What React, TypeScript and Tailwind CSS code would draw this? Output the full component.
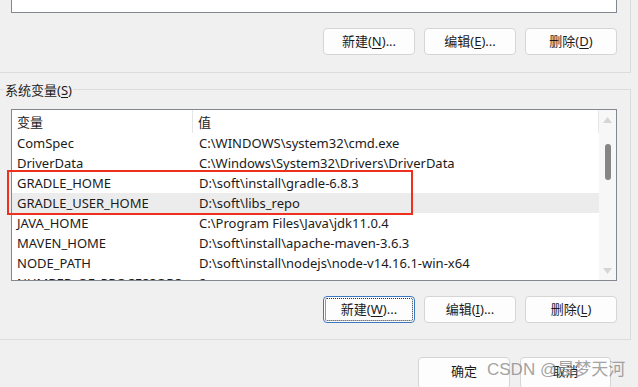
import React from "react";

const rows: [string, string][] = [
  ["ComSpec", "C:\\WINDOWS\\system32\\cmd.exe"],
  ["DriverData", "C:\\Windows\\System32\\Drivers\\DriverData"],
  ["GRADLE_HOME", "D:\\soft\\install\\gradle-6.8.3"],
  ["GRADLE_USER_HOME", "D:\\soft\\libs_repo"],
  ["JAVA_HOME", "C:\\Program Files\\Java\\jdk11.0.4"],
  ["MAVEN_HOME", "D:\\soft\\install\\apache-maven-3.6.3"],
  ["NODE_PATH", "D:\\soft\\install\\nodejs\\node-v14.16.1-win-x64"],
  ["NUMBER_OF_PROCESSORS", "8"],
];

function Btn({ label, k, focus }: { label: string; k: string; focus?: boolean }) {
  return (
    <div
      className={
        "w-[92px] h-[27px] rounded-[4px] bg-[#fdfdfd] flex items-center justify-center text-[13px] text-[#1b1b1b] " +
        (focus ? "border border-[#3b78c2] p-[1px]" : "border border-[#d5d5d5]")
      }
    >
      <div
        className={
          "w-full h-full flex items-center justify-center rounded-[2px] " +
          (focus ? "border border-dotted border-[#333]" : "")
        }
      >
        {label}(<span className="underline underline-offset-2">{k}</span>)
        {label !== "删除" ? "..." : ""}
      </div>
    </div>
  );
}

export default function App() {
  return (
    <div
      className="relative w-[638px] h-[387px] overflow-hidden bg-[#f0f0f0] text-[#1b1b1b]"
      style={{ fontFamily: '"Noto Sans", "Noto Sans CJK SC", sans-serif' }}
    >
      {/* user variables group (cut off) */}
      <div className="w-[631px] h-[73px] border-r border-b border-[#dcdcdc]">
        <div className="ml-[11px] w-[606px] h-[13px] bg-white border-x border-b border-[#828790]" />
        <div className="ml-[323px] mt-[15px] flex gap-[9px]">
          <Btn label="新建" k="N" />
          <Btn label="编辑" k="E" />
          <Btn label="删除" k="D" />
        </div>
      </div>

      {/* system variables group */}
      <div className="relative mt-[16px] w-[631px] h-[251px] border-t border-r border-b border-[#dcdcdc]">
        <div className="absolute left-[4px] top-[-10px] bg-[#f0f0f0] px-[1px] text-[13px] leading-[20px]">
          系统变量(<span className="underline underline-offset-2">S</span>)
        </div>
        <div className="ml-[11px] mt-[19px] w-[606px] h-[172px] bg-white border border-[#828790] flex overflow-hidden">
          <div className="flex-1 flex flex-col text-[13px]">
            <div className="h-[23px] shrink-0 flex items-center border-r border-[#e8e8e8]">
              <div className="w-[181px] h-full flex items-center pl-[5px] pt-[2px] border-r border-[#e5e5e5]">变量</div>
              <div className="pl-[5px] pt-[2px]">值</div>
            </div>
            {rows.map(([n, v]) => (
              <div
                key={n}
                className={
                  "h-[20px] shrink-0 flex items-center pt-[1px] " + (n === "GRADLE_USER_HOME" ? "bg-[#ececec]" : "")
                }
              >
                <div className="w-[181px] pl-[5px] whitespace-nowrap overflow-hidden">{n}</div>
                <div className="pl-[6px] whitespace-nowrap">{v}</div>
              </div>
            ))}
          </div>
          <div className="w-[17px] h-full bg-[#f7f7f7] flex flex-col items-center">
            <svg width="9" height="6" viewBox="0 0 9 6" className="mt-[7px]">
              <path d="M4.5 0 L9 6 L0 6 Z" fill="#d6d6d6" />
            </svg>
            <div className="mt-[21px] w-[6px] h-[36px] rounded-[3px] bg-[#858585]" />
            <div className="flex-1" />
            <svg width="9" height="6" viewBox="0 0 9 6" className="mb-[6px]">
              <path d="M0 0 L9 0 L4.5 6 Z" fill="#d6d6d6" />
            </svg>
          </div>
        </div>
        <div className="ml-[323px] mt-[15px] flex gap-[9px]">
          <Btn label="新建" k="W" focus />
          <Btn label="编辑" k="I" />
          <Btn label="删除" k="L" />
        </div>
      </div>

      {/* footer */}
      <div className="ml-[418px] mt-[17px] flex gap-[10px]">
        <div className="w-[92px] h-[32px] rounded-[4px] bg-[#fdfdfd] border border-[#d5d5d5] flex items-center justify-center text-[13px] pb-[2px]">
          确定
        </div>
        <div className="w-[91px] h-[32px] rounded-[4px] bg-[#fdfdfd] border border-[#d5d5d5] flex items-center justify-center text-[13px] pb-[2px]">
          取消
        </div>
      </div>

      {/* annotation */}
      <div className="absolute left-[7px] top-[170px] w-[406px] h-[45px] border-2 border-[#f0301e]" />
      <div
        className="absolute left-[487px] top-[358px] text-[17px] leading-[24px] text-[#8a8a8a]/80 whitespace-nowrap"
        style={{ fontFamily: '"Liberation Sans", "Noto Sans CJK SC", sans-serif' }}
      >
        CSDN @晨梦天河
      </div>
    </div>
  );
}
